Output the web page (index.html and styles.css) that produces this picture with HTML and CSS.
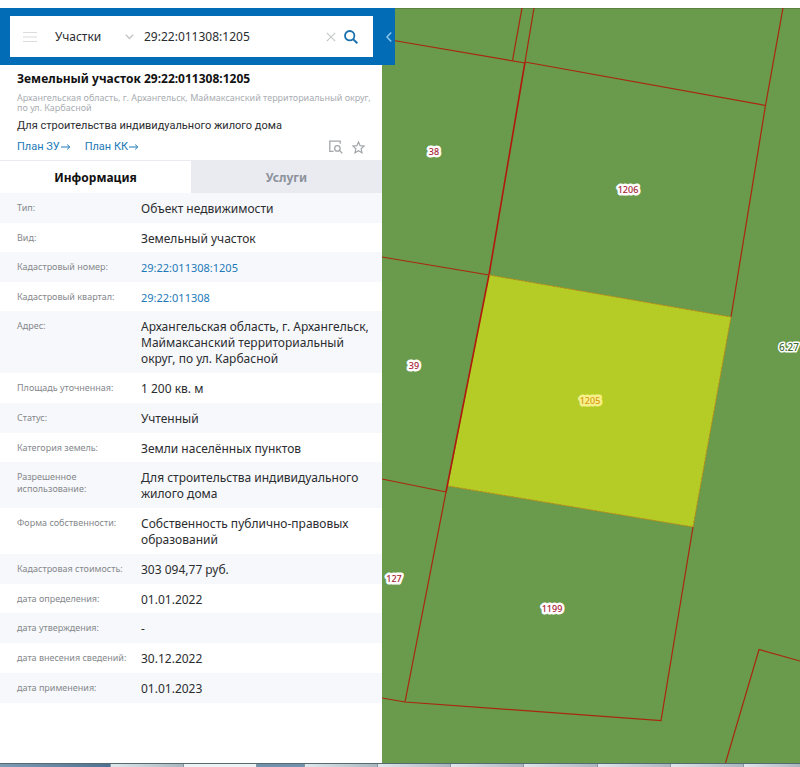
FILE: index.html
```html
<!DOCTYPE html>
<html lang="ru">
<head>
<meta charset="utf-8">
<meta name="viewport" content="width=device-width, initial-scale=1">
<title>Земельный участок 29:22:011308:1205</title>
<link rel="stylesheet" href="styles.css">
</head>
<body>
<div class="app">
  <aside class="panel">
    <header class="panel-header">
      <form class="search">
        <button class="icon-button menu" type="button" aria-label="Меню">
          <svg width="14" height="12" viewBox="0 0 14 12"><path d="M0 1.5h14M0 6h14M0 10.5h14" stroke="#dcdcdc" stroke-width="1.2"/></svg>
        </button>
        <span class="select-wrap">
          <select class="category" aria-label="Тип объекта"><option>Участки</option></select>
          <svg class="chevron" width="9" height="6" viewBox="0 0 9 6"><path d="M.8.8l3.7 3.7L8.2.8" fill="none" stroke="#c2c4c6" stroke-width="1.4"/></svg>
        </span>
        <input class="query" type="text" aria-label="Кадастровый номер" value="29:22:011308:1205">
        <button class="icon-button clear" type="button" aria-label="Очистить">
          <svg width="10" height="10" viewBox="0 0 10 10"><path d="M.8.8l8.4 8.4M9.2.8L.8 9.2" stroke="#c6c8ca" stroke-width="1.2"/></svg>
        </button>
        <button class="icon-button find" type="submit" aria-label="Найти">
          <svg width="14" height="14" viewBox="0 0 14 14"><circle cx="5.7" cy="5.7" r="4.7" fill="none" stroke="#1a70ad" stroke-width="1.8"/><path d="M9.1 9.1l4.2 4.2" stroke="#1a70ad" stroke-width="2"/></svg>
        </button>
      </form>
      <button class="collapse" type="button" aria-label="Свернуть панель">
        <svg width="6" height="10" viewBox="0 0 6 10"><path d="M5.2.6L1 5l4.2 4.4" fill="none" stroke="#8cc8ee" stroke-width="1.5"/></svg>
      </button>
    </header>

    <section class="summary">
      <h1 class="title">Земельный участок 29:22:011308:1205</h1>
      <p class="address">Архангельская область, г. Архангельск, Маймаксанский территориальный округ, по ул. Карбасной</p>
      <p class="purpose">Для строительства индивидуального жилого дома</p>
      <div class="actions">
        <a class="plan-link" href="#">План ЗУ<svg width="10" height="6" viewBox="0 0 10 6"><path d="M0 3h8.6M6.2.6L8.8 3 6.2 5.4" fill="none" stroke="#1d79b8"/></svg></a>
        <a class="plan-link" href="#">План КК<svg width="10" height="6" viewBox="0 0 10 6"><path d="M0 3h8.6M6.2.6L8.8 3 6.2 5.4" fill="none" stroke="#1d79b8"/></svg></a>
        <span class="tools">
          <button class="icon-button" type="button" aria-label="Показать на карте">
            <svg width="14" height="14" viewBox="0 0 14 14" fill="none" stroke="#a3a6aa" stroke-width="1.3"><path d="M4.6 11.400H.8V1.200h10.400v2.600"/><circle cx="8.400" cy="8.400" r="2.700"/><path d="M10.400 10.400l2.900 2.900"/></svg>
          </button>
          <button class="icon-button" type="button" aria-label="В избранное">
            <svg width="13" height="13" viewBox="0 0 13 13"><path d="M6.5 1l1.6 3.7 4 .4-3 2.7.9 4-3.5-2.1L3 11.8l.9-4-3-2.7 4-.4z" fill="none" stroke="#a3a6aa" stroke-width="1.2"/></svg>
          </button>
        </span>
      </div>
    </section>

    <nav class="tabs" role="tablist">
      <button class="tab tab-active" type="button" role="tab" aria-selected="true">Информация</button>
      <button class="tab" type="button" role="tab" aria-selected="false">Услуги</button>
    </nav>

    <table class="details">
      <tbody>
        <tr><th scope="row">Тип:</th><td>Объект недвижимости</td></tr>
        <tr><th scope="row">Вид:</th><td>Земельный участок</td></tr>
        <tr><th scope="row">Кадастровый номер:</th><td><a href="#">29:22:011308:1205</a></td></tr>
        <tr><th scope="row">Кадастровый квартал:</th><td><a href="#">29:22:011308</a></td></tr>
        <tr><th scope="row">Адрес:</th><td>Архангельская область, г. Архангельск, Маймаксанский территориальный округ, по ул. Карбасной</td></tr>
        <tr><th scope="row">Площадь уточненная:</th><td>1 200 кв. м</td></tr>
        <tr><th scope="row">Статус:</th><td>Учтенный</td></tr>
        <tr><th scope="row">Категория земель:</th><td>Земли населённых пунктов</td></tr>
        <tr><th scope="row">Разрешенное использование:</th><td>Для строительства индивидуального жилого дома</td></tr>
        <tr><th scope="row">Форма собственности:</th><td>Собственность публично-правовых образований</td></tr>
        <tr><th scope="row">Кадастровая стоимость:</th><td>303 094,77 руб.</td></tr>
        <tr><th scope="row">дата определения:</th><td>01.01.2022</td></tr>
        <tr><th scope="row">дата утверждения:</th><td>-</td></tr>
        <tr><th scope="row">дата внесения сведений:</th><td>30.12.2022</td></tr>
        <tr><th scope="row">дата применения:</th><td>01.01.2023</td></tr>
      </tbody>
    </table>
  </aside>

  <main class="map">
    <svg class="parcels" viewBox="382 8 418 755" preserveAspectRatio="xMinYMin slice" role="img" aria-label="Карта участков">
      <path class="selected" d="M489 275L731 317 693 527 448 486z"/>
      <g class="boundary">
        <path d="M522 8L512.500 60.500"/>
        <path d="M534 8L525 62"/>
        <path d="M382 38.500L525 63"/>
        <path d="M525 62L765.500 105.500"/>
        <path d="M783 8L765.500 105.500 731 317"/>
        <path d="M382 257L489 275"/>
        <path d="M382 479L446 492"/>
        <path d="M446 492L405 702"/>
        <path d="M693 527L661 720.500 405 702 382 698"/>
        <path d="M725.500 763L759 649.500 800 661"/>
      </g>
      <path class="boundary boundary-strong" d="M525 62L489 275 446 492"/>
      <path class="outline" d="M489 275L731 317 693 527 448 486"/>
      <g class="label">
        <text x="434" y="155">38</text>
        <text x="628" y="193">1206</text>
        <text x="414" y="369">39</text>
        <text x="394" y="582">127</text>
        <text x="552" y="612">1199</text>
        <text class="label-selected" x="590" y="404">1205</text>
        <text class="label-zone" x="779" y="351">6.27</text>
      </g>
    </svg>
  </main>
</div>
<footer class="taskbar">
  <span class="task task-start"></span>
  <span class="task"></span>
  <span class="task task-bright"></span>
  <span class="task task-dark"></span>
  <span class="task"></span>
  <span class="task"></span>
  <span class="task"></span>
  <span class="task"></span>
  <span class="task"></span>
  <span class="task"></span>
  <span class="task task-end"></span>
</footer>
</body>
</html>
```
FILE: styles.css
```css
* {
  box-sizing: border-box;
}

body {
  margin: 0;
  padding-top: 8px;
  min-height: 100vh;
  display: flex;
  flex-direction: column;
  background: #fff;
  color: #2b2d30;
  font: 12px/16px "Noto Sans", "Open Sans", sans-serif;
}

button,
input,
select {
  font: inherit;
  color: inherit;
  border: 0;
  padding: 0;
  margin: 0;
  background: none;
}

a {
  color: #1d79b8;
  text-decoration: none;
}

svg {
  display: block;
  flex: none;
}

.app {
  flex: 1;
  display: grid;
  grid-template-columns: minmax(0, 382fr) minmax(0, 418fr);
}

.panel-header {
  position: relative;
  padding: 8px 9px 8px 10px;
  background: #036cb6;
}

.search {
  display: flex;
  align-items: center;
  height: 41px;
  padding: 0 15px 0 13px;
  background: #fff;
}

.icon-button {
  display: flex;
}

.select-wrap {
  display: flex;
  align-items: center;
  width: 79px;
  margin-left: 18px;
}

.category {
  flex: 1;
  min-width: 0;
  appearance: none;
}

.query {
  flex: 1;
  min-width: 0;
  margin-left: 10px;
}

.find {
  margin-left: 8px;
}

.collapse {
  position: absolute;
  top: 0;
  right: -13px;
  width: 13px;
  height: 100%;
  padding-left: 4px;
  background: #036cb6;
}

.summary {
  padding: 6px 0 5px 17px;
}

.title {
  margin: 0;
  font-size: 12px;
  line-height: 16px;
  color: #111;
}

.address {
  margin: 6px 0 0;
  font-size: 9px;
  line-height: 10px;
  color: #a9adb2;
}

.purpose {
  margin: 5px 0 0;
  font-family: Roboto, sans-serif;
  font-size: 11px;
  line-height: 16px;
}

.actions {
  display: flex;
  align-items: center;
  gap: 14px;
  margin-top: 5px;
  font-family: Roboto, sans-serif;
  font-size: 11px;
}

.plan-link {
  display: flex;
  align-items: center;
  gap: 1px;
}

.tools {
  display: flex;
  align-items: center;
  gap: 9px;
  margin-left: auto;
  margin-right: 17px;
}

.tabs {
  display: flex;
  border-top: 1px solid #e9ebf1;
}

.tab {
  flex: 1;
  height: 32px;
  padding-top: 1px;
  background: #e9ebf1;
  color: #8d929b;
  font-weight: bold;
}

.tab-active {
  background: #fff;
  color: #111;
}

.details {
  width: 100%;
  border-collapse: collapse;
  table-layout: fixed;
}

.details th,
.details td {
  padding: 8px 0 5px;
  text-align: left;
  vertical-align: top;
}

.details th {
  width: 141px;
  padding-left: 17px;
  padding-right: 8px;
  padding-top: 9px;
  font-size: 9px;
  line-height: 12px;
  font-weight: normal;
  color: #85888c;
}

.details td {
  padding-right: 8px;
}

.details td a {
  font-size: 11px;
}

.details tr:nth-child(odd) {
  background: #f7f8fb;
}

.details tr:nth-child(odd) > *,
.details tr:nth-child(4n + 6) > * {
  padding-bottom: 6px;
}

.map {
  position: relative;
  background: #6a9a4b;
  border-top: 1px solid #5c8342;
}

.parcels {
  position: absolute;
  inset: -1px 0 0;
  width: 100%;
  height: calc(100% + 1px);
}

.panel {
  position: relative;
  z-index: 1;
  background: #fff;
}

.selected {
  fill: #b5cc26;
}

.boundary {
  fill: none;
  stroke: #a8280f;
  stroke-width: 1.2;
}

.boundary-strong {
  stroke: #b01a0c;
  stroke-width: 1.6;
}

.outline {
  fill: none;
  stroke: #b98a18;
  stroke-width: 1;
  stroke-dasharray: 3 1;
}

.label {
  font-size: 9px;
  font-weight: 500;
  text-anchor: middle;
  fill: #a51c32;
  stroke: #fff;
  stroke-width: 5px;
  stroke-linejoin: round;
  paint-order: stroke;
}

.label-selected {
  fill: #d99a10;
  stroke: #f5f18a;
}

.label-zone {
  font-size: 10px;
  text-anchor: start;
  fill: #3f6b2c;
  stroke-width: 3px;
}

.taskbar {
  display: flex;
  height: 4px;
  border-top: 1px solid #566a70;
}

.task {
  flex: 73;
  border-left: 1px solid #8797a2;
  background: linear-gradient(90deg, #dfe7ec, #a9b6be);
}

.task-start {
  flex: 111;
  border-left: 0;
  background: linear-gradient(90deg, #7f9cb5, #4f7191);
}

.task-bright {
  background: #eef2f5;
}

.task-dark {
  flex: 48;
  background: #7191ad;
}

.task-end {
  flex: 57;
}
```
